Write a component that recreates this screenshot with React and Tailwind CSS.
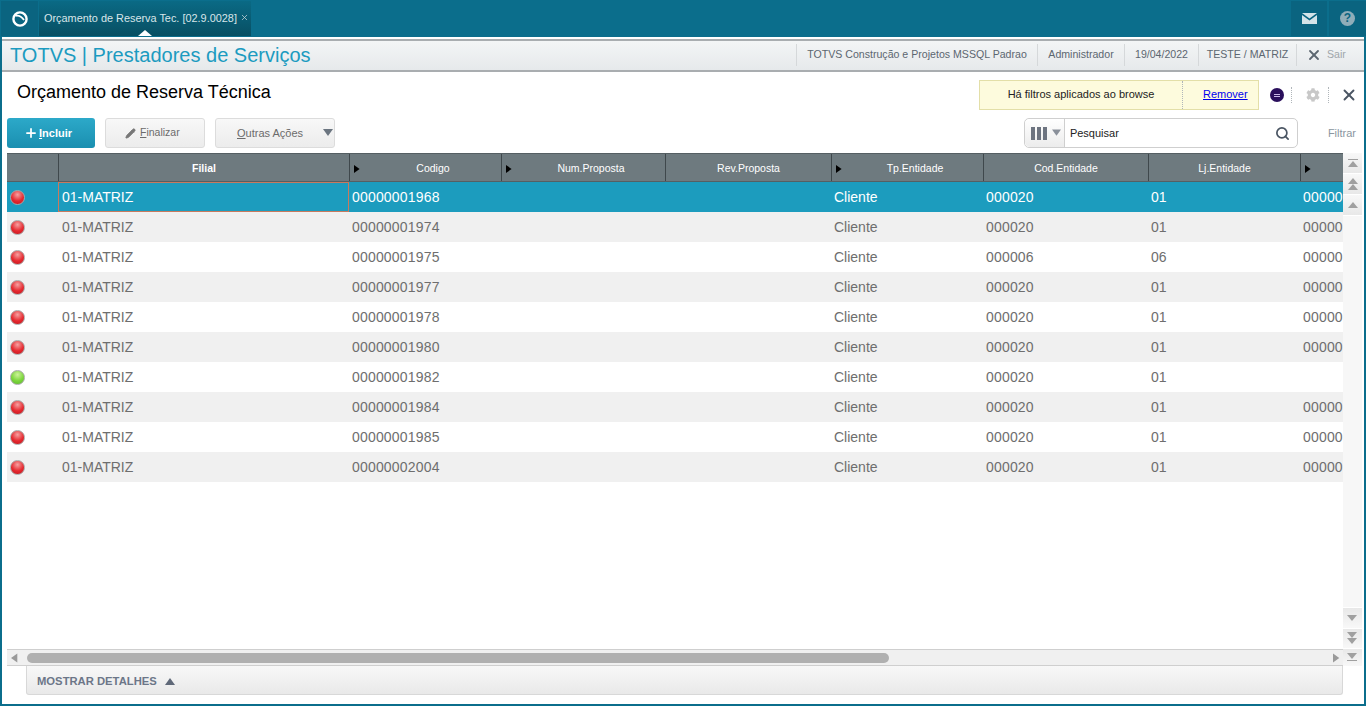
import React from "react";
import { X, Pencil, Plus, Search } from "lucide-react";
import { FaCog } from "react-icons/fa";

const cols = [
  { name: "Filial", w: "w-[291px]", bold: true },
  { name: "Codigo", w: "w-[152px]", mark: true },
  { name: "Num.Proposta", w: "w-[164px]", mark: true },
  { name: "Rev.Proposta", w: "w-[166px]" },
  { name: "Tp.Entidade", w: "w-[152px]", mark: true },
  { name: "Cod.Entidade", w: "w-[165px]" },
  { name: "Lj.Entidade", w: "w-[152px]" },
  { name: "", w: "w-[43px]", mark: true },
];

const rows = [
  ["00000001968", "000020", "01", "00000", "red"],
  ["00000001974", "000020", "01", "00000", "red"],
  ["00000001975", "000006", "06", "00000", "red"],
  ["00000001977", "000020", "01", "00000", "red"],
  ["00000001978", "000020", "01", "00000", "red"],
  ["00000001980", "000020", "01", "00000", "red"],
  ["00000001982", "000020", "01", "", "green"],
  ["00000001984", "000020", "01", "00000", "red"],
  ["00000001985", "000020", "01", "00000", "red"],
  ["00000002004", "000020", "01", "00000", "red"],
];

const Dot = ({ color }) => (
  <span
    className={`block w-[15px] h-[15px] rounded-full border border-[#a9a9a9] ${
      color === "red"
        ? "bg-[radial-gradient(circle_at_50%_28%,#f7a0a0,#e52a30_55%,#c4141c)]"
        : "bg-[radial-gradient(circle_at_50%_28%,#cdf29a,#7cd63c_55%,#5cb82a)]"
    }`}
  />
);

const Tri = ({ dir = "up", className = "" }) => {
  const points = {
    up: "0,7 5,0 10,7",
    down: "0,0 10,0 5,7",
    left: "7,0 7,10 0,5",
    right: "0,0 7,5 0,10",
  }[dir];
  return (
    <svg width="10" height="10" viewBox="0 0 10 10" className={className}>
      <polygon points={points} fill="currentColor" />
    </svg>
  );
};

const ScrollBtn = ({ kind, down, h = "h-[21px]" }) => (
  <div className={`${h} flex flex-col items-center justify-center bg-gradient-to-b from-[#f8f8f8] to-[#e8e8e8] border-b border-white text-[#a0a0a0] ${down ? "rotate-180" : ""}`}>
    {kind === "end" && <div className="w-[10px] h-px bg-[#a0a0a0] mb-[1px]" />}
    <svg width="10" height={kind === "double" ? 12 : 6} viewBox={kind === "double" ? "0 0 10 12" : "0 0 10 6"}>
      <polygon points="0,6 5,0 10,6" fill="currentColor" />
      {kind === "double" && <polygon points="0,12 5,6 10,12" fill="currentColor" />}
    </svg>
  </div>
);

const Divider = () => <div className="w-px h-[22px] bg-[#d5d8da]" />;

export default function App() {
  return (
    <div className="h-[706px] w-[1366px] overflow-hidden flex flex-col bg-[#0b6e8c] font-['Liberation_Sans',Arial,sans-serif]">
      {/* top bar */}
      <div className="h-[37px] pt-[1px] flex items-stretch bg-[#0b6e8c]">
        <div className="w-[37px] h-[35px] ml-px flex items-center justify-center bg-[#0a6480]">
          <svg width="18" height="18" viewBox="0 0 18 18" fill="none">
            <circle cx="9" cy="9" r="6.6" stroke="white" strokeWidth="2.4" />
            <path d="M4.5 5.8 C7.5 5.2 10.5 6.4 13 10" stroke="white" strokeWidth="1.8" />
          </svg>
        </div>
        <div className="relative ml-px w-[212px] h-[35px] flex items-center pl-[5px] bg-gradient-to-b from-[#0a6a85] to-[#084f63] text-[#d8e6ea] text-[10.9px]">
          <span className="whitespace-nowrap">Orçamento de Reserva Tec. [02.9.0028]</span>
          <X size={9} className="ml-[3px] mb-[3px] text-[#c5d5da]" />
          <span className="absolute bottom-0 left-[99px] w-0 h-0 border-x-[7px] border-x-transparent border-b-[6px] border-b-white" />
        </div>
        <div className="flex-1" />
        <div className="w-[36px] h-[35px] flex items-center justify-center bg-[#0a6480] mr-[2px]">
          <svg width="15" height="11" viewBox="0 0 15 11">
            <path d="M0 0 H15 L7.5 5.5 Z" fill="#d4e3e8" />
            <path d="M0 2 L7.5 7.5 L15 2 V11 H0 Z" fill="#d4e3e8" />
          </svg>
        </div>
        <div className="w-[37px] h-[35px] flex items-center justify-center bg-[#0a6480]">
          <span className="w-[15px] h-[15px] rounded-full bg-[#8fadb9] text-[#0a6480] text-[12px] font-bold leading-[15px] text-center">?</span>
        </div>
      </div>

      {/* white frame */}
      <div className="flex-1 mx-[2px] mb-[2px] pt-[2px] flex flex-col bg-white min-h-0">
        {/* system bar */}
        <div className="h-[33px] pb-[2px] flex items-center bg-gradient-to-b from-[#f3f5f6] to-[#e6e9eb] border-y-2 border-[#a9adb0]">
          <div className="ml-[8px] text-[20px] text-[#1c9bc0] whitespace-nowrap">TOTVS | Prestadores de Serviços</div>
          <div className="flex-1" />
          <div className="flex items-center text-[10.6px] text-[#5c6670]">
            <Divider />
            <span className="w-[240px] text-center">TOTVS Construção e Projetos MSSQL Padrao</span>
            <Divider />
            <span className="w-[86px] text-center">Administrador</span>
            <Divider />
            <span className="w-[73px] text-center">19/04/2022</span>
            <Divider />
            <span className="w-[97px] text-center">TESTE / MATRIZ</span>
            <Divider />
            <span className="w-[67px] flex items-center pl-[9px] text-[#a0a6ab]">
              <X size={16} strokeWidth={2.75} className="text-[#5c6670] mr-[5px]" />
              Sair
            </span>
          </div>
        </div>

        {/* title row */}
        <div className="h-[46px] flex items-center">
          <div className="ml-[15px] text-[18px] text-black whitespace-nowrap mb-[6px]">Orçamento de Reserva Técnica</div>
          <div className="flex-1" />
          <div className="w-[280px] h-[30px] mb-[1px] flex items-center text-[11px] bg-[#fdfbdd] border border-[#e3dfa8]">
            <div className="w-[202px] text-center text-[#222]">Há filtros aplicados ao browse</div>
            <div className="h-full border-l border-dotted border-[#b0b6ba]" />
            <div className="flex-1 pl-[20px] text-[#0000ee] underline">Remover</div>
          </div>
          <div className="w-[14px] h-[14px] ml-[11px] rounded-full bg-[#2a0f5c] flex items-center justify-center">
            <span className="w-[6px] h-[3px] border-y border-[#c9b8e8]" />
          </div>
          <div className="h-[16px] ml-[7px] border-l border-dotted border-[#b0b6ba]" />
          <FaCog size={14} className="ml-[14px] text-[#c8c8c8]" />
          <div className="h-[16px] ml-[8px] border-l border-dotted border-[#b0b6ba]" />
          <X size={18} strokeWidth={2.5} className="ml-[11px] mr-[6px] text-[#4a5563]" />
        </div>

        {/* toolbar */}
        <div className="h-[30px] flex items-center text-[11px]">
          <button className="ml-[5px] w-[88px] h-[30px] flex items-center pl-[17px] rounded-[3px] bg-gradient-to-b from-[#2ca9c9] to-[#1a8fb0] text-white font-bold">
            <Plus size={14} strokeWidth={3} className="mr-[1px]" />
            <span><span className="underline">I</span>ncluir</span>
          </button>
          <button className="ml-[10px] w-[100px] h-[30px] flex items-center pl-[19px] rounded-[3px] border border-[#dcdcdc] bg-gradient-to-b from-[#f8f8f8] to-[#ececec] text-[#6b6b6b] text-[10.5px]">
            <Pencil size={11} fill="#777" stroke="#777" className="mr-[4px]" />
            <span><span className="underline">F</span>inalizar</span>
          </button>
          <button className="relative ml-[10px] w-[120px] h-[30px] flex items-center pl-[21px] rounded-[3px] border border-[#dcdcdc] bg-gradient-to-b from-[#f8f8f8] to-[#ececec] text-[#6b6b6b]">
            <span><span className="underline">O</span>utras Ações</span>
            <Tri dir="down" className="absolute right-[1px] top-[10px] text-[#6b7580]" />
          </button>
          <div className="flex-1" />
          <div className="w-[274px] h-[30px] flex items-center rounded-[5px] border border-[#cfcfcf] bg-white">
            <div className="w-[40px] h-full flex items-center pl-[6px] gap-[5px] border-r border-[#cfcfcf] rounded-l-[5px] bg-gradient-to-b from-white to-[#ececec]">
              <span className="flex gap-[2px]">
                <i className="block w-[4px] h-[13px] bg-[#6d7480]" />
                <i className="block w-[4px] h-[13px] bg-[#6d7480]" />
                <i className="block w-[4px] h-[13px] bg-[#6d7480]" />
              </span>
              <Tri dir="down" className="text-[#8a909a] mt-[2px] w-[9px]" />
            </div>
            <span className="flex-1 pl-[5px] text-[#222]">Pesquisar</span>
            <Search size={15} strokeWidth={2.75} className="mr-[7px] text-[#4a5563]" />
          </div>
          <span className="ml-[30px] mr-[8px] text-[#8a96a0]">Filtrar</span>
        </div>

        {/* browse */}
        <div className="flex-1 min-h-0 mt-[5px] pl-[5px] flex">
          <div className="w-[1336px] flex flex-col">
            <div className="h-[29px] flex bg-[#6e7a7f] border-y border-[#555f63] text-[10.5px] text-white">
              <div className="w-[51px] shrink-0" />
              {cols.map((c) => (
                <div key={c.name} className={`${c.w} relative shrink-0 flex items-center justify-center pt-[2px] border-l border-[#3f484c] ${c.bold ? "font-bold" : ""} ${c.mark ? "pl-[15px]" : ""}`}>
                  {c.mark && <Tri dir="right" className="absolute left-[4px] top-[10px] w-[8px] text-black" />}
                  {c.name}
                </div>
              ))}
            </div>
            {rows.map((r, i) => (
              <div
                key={r[0]}
                className={`h-[30px] shrink-0 flex items-center text-[14px] overflow-hidden ${
                  i === 0 ? "bg-[#1c9cbe] text-white" : i % 2 ? "bg-[#f0f0f0] text-[#6e6e6e]" : "bg-white text-[#6e6e6e]"
                }`}
              >
                <div className="w-[51px] shrink-0 pl-[3px]"><Dot color={r[4]} /></div>
                <div className={`w-[291px] h-[30px] shrink-0 pl-[3px] flex items-center border ${i === 0 ? "border-[#c77a5e]" : "border-transparent"}`}>01-MATRIZ</div>
                <div className="w-[152px] shrink-0 pl-[3px] tracking-[0.18px]">{r[0]}</div>
                <div className="w-[330px] shrink-0" />
                <div className="w-[152px] shrink-0 pl-[3px]">Cliente</div>
                <div className="w-[165px] shrink-0 pl-[3px] tracking-[0.18px]">{r[1]}</div>
                <div className="w-[152px] shrink-0 pl-[3px]">{r[2]}</div>
                <div className="w-[43px] shrink-0 pl-[3px] overflow-hidden tracking-[0.18px]">{r[3]}</div>
              </div>
            ))}
            <div className="flex-1" />
            {/* horizontal scroll */}
            <div className="h-[17px] flex items-center bg-[#f0f0f0] border-y border-[#cfcfcf] text-[#9a9a9a]">
              <Tri dir="left" className="ml-[4px] w-[9px]" />
              <div className="ml-[7px] w-[862px] h-[10px] rounded-[5px] bg-[#b0b0b0]" />
              <div className="flex-1" />
              <Tri dir="right" className="mr-[1px] w-[9px]" />
            </div>
          </div>
          <div className="w-[19px] flex flex-col bg-[#f4f4f4]">
            <ScrollBtn kind="end" />
            <ScrollBtn kind="double" />
            <ScrollBtn kind="single" />
            <div className="flex-1 bg-[#f7f7f7]" />
            <ScrollBtn kind="single" down />
            <ScrollBtn kind="double" down h="h-[20px]" />
            <ScrollBtn kind="end" down h="h-[18px]" />
          </div>
        </div>

        {/* details */}
        <div className="h-[38px] pl-[24px] pr-[21px] pb-[9px]">
          <div className="h-full flex items-center pl-[10px] pt-[3px] rounded-b-[3px] border border-t-0 border-[#d8d8d8] bg-gradient-to-b from-[#f8f8f8] to-[#e9e9e9] text-[11.25px] font-bold text-[#6c7688]">
            MOSTRAR DETALHES
            <Tri dir="up" className="ml-[8px] mt-[2px] text-[#5f6878]" />
          </div>
        </div>
      </div>
    </div>
  );
}
